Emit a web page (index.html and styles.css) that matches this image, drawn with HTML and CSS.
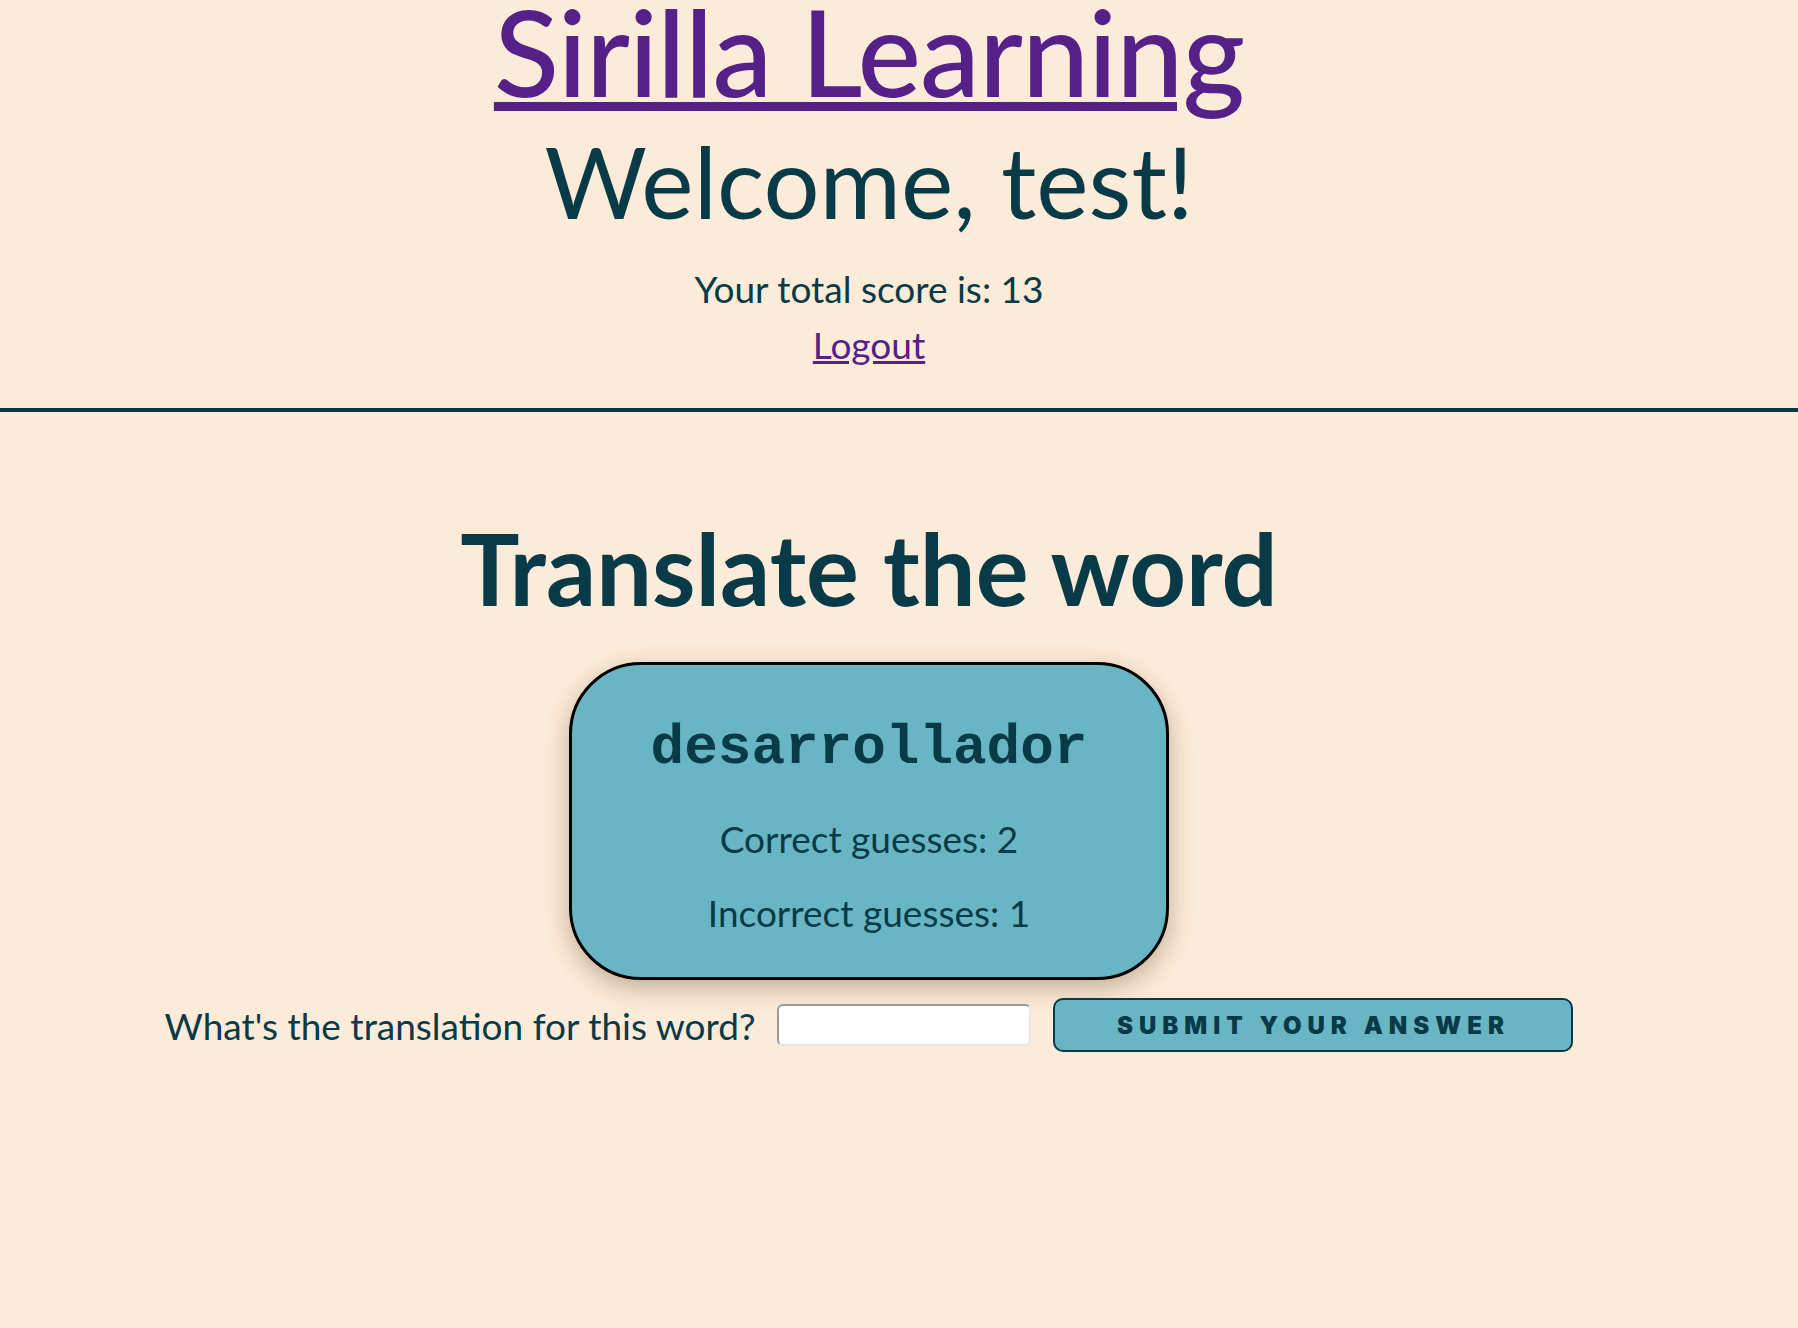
FILE: index.html
```html
<!DOCTYPE html>
<html lang="en">
<head>
<meta charset="utf-8">
<title>Sirilla Learning</title>
<link rel="stylesheet" href="styles.css">
</head>
<body>
<header class="header">
  <a class="brand" href="#">Sirilla Learning</a>
  <h1 class="welcome">Welcome, test!</h1>
  <p class="score">Your total score is: 13</p>
  <a class="logout" href="#">Logout</a>
</header>
<hr class="divider">
<main class="main">
  <h2 class="heading">Translate the word</h2>
  <section class="card">
    <h3 class="word">desarrollador</h3>
    <p class="stat">Correct guesses: 2</p>
    <p class="stat">Incorrect guesses: 1</p>
  </section>
  <form class="guess-form">
    <label class="guess-label" for="guess">What's the translation for this word?</label>
    <input class="guess-input" id="guess" type="text">
    <button class="submit" type="button">Submit your answer</button>
  </form>
</main>
</body>
</html>
```
FILE: styles.css
```css
html, body {
  margin: 0;
  padding: 0;
  background: #fcebd8;
}
body {
  font-family: "Lato", "Open Sans", sans-serif;
  color: #083a47;
  min-height: 1328px;
}
.header {
  display: flex;
  flex-direction: column;
  align-items: center;
  padding-right: 60px;
  padding-bottom: 41px;
}
.brand {
  margin-top: -9px;
  font-size: 120px;
  font-weight: 500;
  line-height: 120px;
  color: #552088;
  text-decoration-thickness: 9px;
  text-underline-offset: 5px;
  letter-spacing: -1px;
}
.welcome {
  margin: 15px 0 0;
  font-size: 99px;
  font-weight: 400;
  line-height: 110px;
}
.score {
  margin: 31px 0 0;
  font-size: 37px;
  line-height: 44px;
}
.logout {
  margin-top: 12px;
  font-size: 37px;
  line-height: 44px;
  color: #552088;
}
.divider {
  margin: 0;
  border: 0;
  border-top: 4px solid #083a47;
}
.main {
  display: flex;
  flex-direction: column;
  align-items: center;
  padding-right: 60px;
  padding-top: 101px;
}
.heading {
  margin: 0;
  font-size: 99px;
  line-height: 110px;
  font-weight: 700;
}
.card {
  margin-top: 39px;
  width: 600px;
  height: 318px;
  box-sizing: border-box;
  background: #68b6c4;
  border: 3px solid #000;
  border-radius: 72px;
  box-shadow: 0 8px 24px rgba(90, 60, 30, 0.35);
  display: flex;
  flex-direction: column;
  align-items: center;
  padding-top: 51px;
}
.word {
  margin: 0;
  font-family: "Liberation Mono", "Courier New", monospace;
  font-weight: 700;
  font-size: 56px;
  line-height: 64px;
}
.stat {
  margin: 37px 0 0;
  font-size: 37px;
  line-height: 44px;
}
.stat + .stat {
  margin-top: 30px;
}
.guess-form {
  display: flex;
  align-items: center;
  gap: 22px;
  margin-top: 18px;
}
.guess-label {
  font-size: 37px;
}
.guess-input {
  width: 254px;
  height: 42px;
  box-sizing: border-box;
  border: 2px solid #9a9a9a;
  border-right-color: #e6e6e6;
  border-bottom-color: #e6e6e6;
  border-radius: 6px;
  background: #fff;
}
.submit {
  width: 520px;
  height: 54px;
  background: #68b6c4;
  border: 2px solid #083a47;
  border-radius: 10px;
  color: #083a47;
  font-family: "Inter", "Liberation Sans", sans-serif;
  font-weight: 900;
  font-size: 24px;
  letter-spacing: 6px;
  text-transform: uppercase;
}
```
